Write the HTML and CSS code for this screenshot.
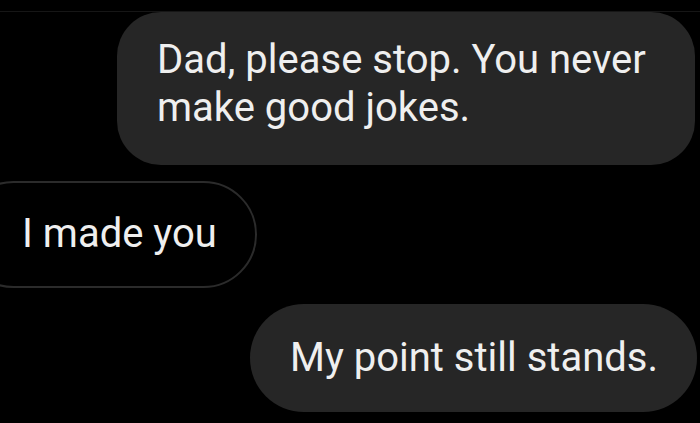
FILE: index.html
```html
<!DOCTYPE html>
<html>
<head>
<meta charset="utf-8">
<link rel="stylesheet" href="styles.css">
</head>
<body>
<div class="chat">
  <div class="msg out first">Dad, please stop. You never make good jokes.</div>
  <div class="msg in">I made you</div>
  <div class="msg out last">My point still stands.</div>
</div>
</body>
</html>
```
FILE: styles.css
```css
html, body {
  margin: 0;
  padding: 0;
  background: #000;
  width: 700px;
  height: 423px;
  overflow: hidden;
}
.chat {
  margin-top: 11px;
  border-top: 1px solid #161616;
  display: flex;
  flex-direction: column;
  font-family: Roboto, "Liberation Sans", sans-serif;
  font-size: 40px;
  line-height: 48px;
  color: #efefef;
}
.msg {
  box-sizing: border-box;
  white-space: normal;
}
.out {
  align-self: flex-end;
  background: #262626;
}
.first {
  width: 578px;
  margin-right: 5px;
  padding: 24px 30px 33px 40px;
  border-radius: 44px;
}
.in {
  align-self: flex-start;
  margin-top: 16px;
  margin-left: -40px;
  width: 297px;
  height: 107px;
  padding: 27px 0 0 60px;
  border: 2px solid #2b2b2b;
  border-radius: 54px;
}
.last {
  margin-top: 16px;
  margin-right: 3px;
  width: 447px;
  height: 108px;
  padding: 30px 0 0 40px;
  border-radius: 54px;
}
```
